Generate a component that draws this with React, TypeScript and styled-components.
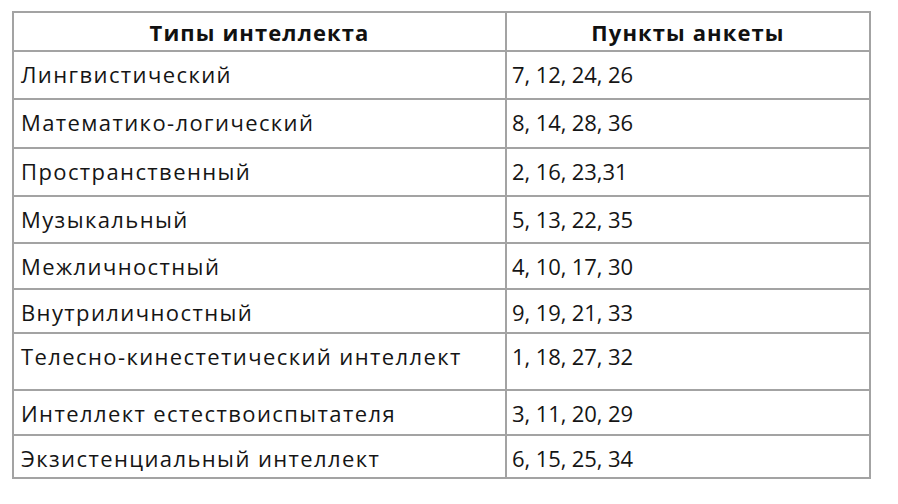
import React from "react";
import styled, { createGlobalStyle } from "styled-components";

const Global = createGlobalStyle`
  html, body { margin: 0; padding: 0; background: #ffffff; }
  body { font-family: "Open Sans", "Noto Sans", sans-serif; color: #151515; }
`;

const Page = styled.div`
  width: 898px;
  height: 504px;
  padding: 11px 0 0 12px;
  box-sizing: border-box;
  background: #fff;
`;

const Table = styled.table`
  border-collapse: collapse;
  table-layout: fixed;
  width: 857px;
`;

const Head = styled.th<{ $w: number }>`
  width: ${(p) => p.$w}px;
  height: 39px;
  box-sizing: border-box;
  border: 2px solid #a3a3a3;
  font-weight: 700;
  font-size: 22px;
  letter-spacing: 1.1px;
  text-align: center;
  vertical-align: middle;
  padding: 0;
  color: #111;
`;

const Row = styled.tr<{ $h: number }>`
  height: ${(p) => p.$h}px;
`;

const Cell = styled.td<{ $spacing: number; $pad: number }>`
  box-sizing: border-box;
  border: 2px solid #a3a3a3;
  font-size: 22px;
  letter-spacing: ${(p) => p.$spacing}px;
  text-align: left;
  vertical-align: top;
  padding: 7px 0 0 ${(p) => p.$pad}px;
  line-height: 30px;
  white-space: nowrap;
  color: #151515;
`;

const rows: [string, string, number][] = [
  ["Лингвистический", "7, 12, 24, 26", 48],
  ["Математико-логический", "8, 14, 28, 36", 49],
  ["Пространственный", "2, 16, 23,31", 48],
  ["Музыкальный", "5, 13, 22, 35", 47],
  ["Межличностный", "4, 10, 17, 30", 46],
  ["Внутриличностный", "9, 19, 21, 33", 44],
  ["Телесно-кинестетический интеллект", "1, 18, 27, 32", 57],
  ["Интеллект естествоиспытателя", "3, 11, 20, 29", 45],
  ["Экзистенциальный интеллект", "6, 15, 25, 34", 43],
];

export default function App() {
  return (
    <>
      <Global />
      <Page>
        <Table>
          <thead>
            <tr>
              <Head $w={493}>Типы интеллекта</Head>
              <Head $w={364}>Пункты анкеты</Head>
            </tr>
          </thead>
          <tbody>
            {rows.map(([a, b, h]) => (
              <Row key={a} $h={h}>
                <Cell $spacing={1.4} $pad={7}>{a}</Cell>
                <Cell $spacing={-0.1} $pad={5}>{b}</Cell>
              </Row>
            ))}
          </tbody>
        </Table>
      </Page>
    </>
  );
}
